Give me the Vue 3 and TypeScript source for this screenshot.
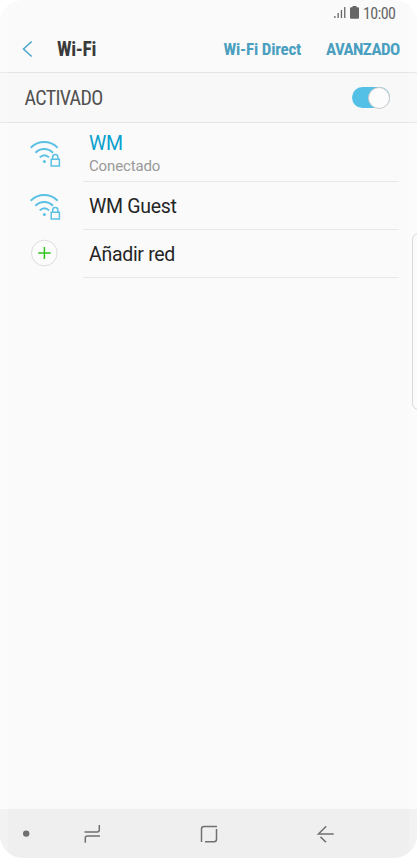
<script setup lang="ts">
interface Network {
  name: string
  status?: string
}

const networks: Network[] = [
  { name: 'WM', status: 'Conectado' },
  { name: 'WM Guest' },
]
const signalBars: number[] = [2, 5, 8, 11]
</script>

<template>
  <main class="phone">
    <header class="status">
      <svg class="signal" width="12" height="12" viewBox="0 0 12 12">
        <rect v-for="(h, i) in signalBars" :key="h" :x="i * 3.3 + 0.2" :y="12 - h" width="1.3" :height="h" />
      </svg>
      <svg class="battery" width="9" height="13" viewBox="0 0 9 13">
        <path d="M2.5 0h4v1.2H8q1 0 1 1v9.6q0 1-1 1H1q-1 0-1-1V2.2q0-1 1-1h1.5z" />
      </svg>
      <span class="clock">10:00</span>
    </header>

    <nav class="toolbar">
      <svg class="back" width="12" height="18" viewBox="0 0 12 18"><path d="M9.700 1.500 1.500 9l8.200 7.500" /></svg>
      <h1>Wi-Fi</h1>
      <span class="action direct">Wi-Fi Direct</span>
      <span class="action advanced">AVANZADO</span>
    </nav>

    <section class="master">
      <span class="state">ACTIVADO</span>
      <span class="switch"><i class="knob"></i></span>
    </section>

    <ul class="list">
      <li v-for="n in networks" :key="n.name" :class="{ connected: n.status }">
        <svg class="wifi" width="34" height="30" viewBox="0 0 34 30">
          <path d="M1.700 7.700Q7.700 2 15.200 2t13.500 5.700M6.400 12.700Q10.200 9 15.200 9t8.800 3.700M10.700 17.400q4.700-4.400 9.400 0" />
          <circle class="dot" cx="15.400" cy="21.500" r="1.500" />
          <path class="lock" d="M22.200 19.200h8.200v6.800h-8.200zM23.700 19.200v-1.900q0-2.700 2.600-2.700t2.600 2.700v1.900" />
        </svg>
        <div class="text">
          <span class="name">{{ n.name }}</span>
          <span v-if="n.status" class="detail">{{ n.status }}</span>
        </div>
      </li>
      <li>
        <svg class="add" width="28" height="28" viewBox="0 0 28 28">
          <circle cx="14.300" cy="14" r="12.800" />
          <path d="M8.200 14h12.500M14.400 8v12" />
        </svg>
        <div class="text"><span class="name">Añadir red</span></div>
      </li>
    </ul>

    <aside class="edge"></aside>

    <footer class="keys">
      <svg width="417" height="49" viewBox="0 0 417 49">
        <circle cx="26.200" cy="24.600" r="3.200" />
        <path d="M84.500 22.900h12.700q2.100 0 2.100-2.100V16M100 27h-12.600q-2.100 0-2.100 2.100v4.700" />
        <path d="M201.500 33V20q0-2.500 2.500-2.500h13M216.500 20v10.300q0 2.500-2.500 2.500h-9" />
        <path d="M333.700 25h-15.200l7.700-7.700M320.500 27.900l5.500 5.300" />
      </svg>
    </footer>
  </main>
</template>

<style>
body {
  background: #fff;
}
</style>

<style scoped>
.phone {
  position: relative;
  box-sizing: border-box;
  display: flex;
  flex-direction: column;
  width: 417px;
  height: 858px;
  overflow: hidden;
  border-radius: 23px;
  background: #fafafa;
  font-family: Roboto, sans-serif;
  color: #252525;
}
.phone::after {
  content: "";
  position: absolute;
  inset: 0;
  border: solid rgba(255, 255, 255, 0.2);
  border-width: 0 8px;
  pointer-events: none;
}
.status {
  display: flex;
  align-items: center;
  height: 26px;
  padding-left: 334px;
  fill: #666;
}
.signal,
.battery {
  position: relative;
  top: -1px;
}
.battery {
  margin-left: 4px;
}
.clock {
  margin-left: 4px;
  font-family: "Roboto Condensed", Roboto, sans-serif;
  font-stretch: 75%;
  font-size: 16px;
  letter-spacing: -0.600px;
  color: #666;
}
.toolbar {
  display: flex;
  align-items: center;
  height: 46px;
  border-bottom: 1px solid #e4e4e4;
  font-family: "Roboto Condensed", Roboto, sans-serif;
  font-stretch: 75%;
}
.back {
  margin-left: 22px;
  fill: none;
  stroke: #4ba5ca;
  stroke-width: 1.500;
}
h1 {
  width: 166.500px;
  margin: 0 0 0 23px;
  font-size: 19.500px;
  font-weight: 700;
  letter-spacing: -0.350px;
  color: #3a3a3a;
}
.action {
  font-size: 17px;
  font-weight: 700;
  letter-spacing: -0.200px;
  color: #4a9fc0;
  white-space: nowrap;
}
.advanced {
  letter-spacing: -0.600px;
}
.direct {
  width: 102.500px;
}
.master {
  display: flex;
  align-items: center;
  justify-content: space-between;
  height: 49px;
  padding: 0 27px 0 24.500px;
  border-bottom: 1px solid #e4e4e4;
  background: #f8f8f8;
}
.state {
  padding-top: 1px;
  font-family: "Roboto Condensed", Roboto, sans-serif;
  font-stretch: 75%;
  font-size: 20px;
  letter-spacing: -0.650px;
  color: #505050;
}
.switch {
  display: flex;
  align-items: center;
  justify-content: flex-end;
  width: 38px;
  height: 21px;
  border-radius: 11px;
  background: #55c0e5;
}
.knob {
  box-sizing: border-box;
  flex: none;
  width: 22px;
  height: 22px;
  border: 1px solid #ccc;
  border-radius: 50%;
  background: #fcfcfc;
}
.list {
  margin: 0;
  padding: 0;
  list-style: none;
}
li {
  display: flex;
  align-items: center;
  height: 48px;
}
li.connected {
  height: 59px;
}
.wifi {
  margin: 4px 20px 0 29px;
  fill: none;
  stroke: #5ac1e4;
  stroke-width: 1.900;
}
.wifi .dot {
  fill: #5ac1e4;
  stroke: none;
}
.wifi .lock {
  stroke-width: 1.500;
}
.add {
  margin: -2px 25px 0 30px;
  fill: none;
  stroke: #2fc41d;
  stroke-width: 1.500;
}
.add circle {
  fill: #fcfcfc;
  stroke: #ddd;
  stroke-width: 1;
}
.text {
  box-sizing: border-box;
  display: flex;
  flex-direction: column;
  justify-content: center;
  width: 316px;
  height: 100%;
  padding: 2px 0 0 6px;
  border-bottom: 1px solid #e8e8e8;
}
.name {
  font-size: 19.500px;
  line-height: 24px;
  letter-spacing: -0.300px;
}
.connected .text {
  padding-top: 5px;
}
.connected .name {
  color: #08a0cc;
}
.detail {
  font-size: 15px;
  line-height: 21px;
  letter-spacing: -0.150px;
  color: #999;
}
.edge {
  position: absolute;
  top: 233px;
  right: -8px;
  box-sizing: border-box;
  width: 13px;
  height: 177px;
  border: 1px solid #d0d0d0;
  border-radius: 7px;
}
.keys {
  height: 49px;
  margin-top: auto;
  background: #efefef;
}
.keys svg {
  display: block;
  fill: none;
  stroke: #707070;
  stroke-width: 1.500;
}
.keys circle {
  fill: #707070;
  stroke: none;
}
</style>
